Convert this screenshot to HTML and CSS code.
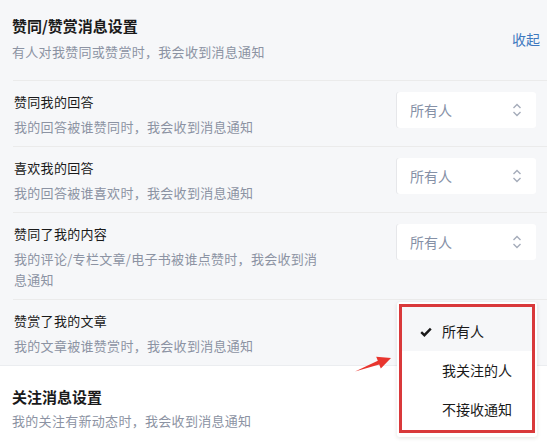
FILE: index.html
```html
<!DOCTYPE html>
<html lang="zh-CN">
<head>
  <meta charset="UTF-8">
  <title>消息设置</title>
  <link rel="stylesheet" href="styles.css">
</head>
<body>

<!-- 赞同/赞赏 -->
<div class="panel">
  <div class="panel-head">
    <div>
      <div class="section-title">赞同/赞赏消息设置</div>
      <div class="desc">有人对我赞同或赞赏时，我会收到消息通知</div>
    </div>
    <a class="toggle">收起</a>
  </div>

  <div class="rows">
    <div class="row">
      <div class="row-text">
        <div class="row-title">赞同我的回答</div>
        <div class="desc">我的回答被谁赞同时，我会收到消息通知</div>
      </div>
      <div class="select">所有人
        <svg class="chevron" width="10" height="14" viewBox="0 0 10 14"><polyline points="1.5,5 5,1.5 8.5,5"/><polyline points="1.5,9 5,12.5 8.5,9"/></svg>
      </div>
    </div>

    <div class="row">
      <div class="row-text">
        <div class="row-title">喜欢我的回答</div>
        <div class="desc">我的回答被谁喜欢时，我会收到消息通知</div>
      </div>
      <div class="select">所有人
        <svg class="chevron" width="10" height="14" viewBox="0 0 10 14"><polyline points="1.5,5 5,1.5 8.5,5"/><polyline points="1.5,9 5,12.5 8.5,9"/></svg>
      </div>
    </div>

    <div class="row">
      <div class="row-text">
        <div class="row-title">赞同了我的内容</div>
        <div class="desc">我的评论/专栏文章/电子书被谁点赞时，我会收到消息通知</div>
      </div>
      <div class="select">所有人
        <svg class="chevron" width="10" height="14" viewBox="0 0 10 14"><polyline points="1.5,5 5,1.5 8.5,5"/><polyline points="1.5,9 5,12.5 8.5,9"/></svg>
      </div>
    </div>

    <div class="row">
      <div class="row-text">
        <div class="row-title">赞赏了我的文章</div>
        <div class="desc">我的文章被谁赞赏时，我会收到消息通知</div>
      </div>
    </div>
  </div>
</div>

<!-- 关注 -->
<div class="section">
  <div class="section-title">关注消息设置</div>
  <div class="desc">我的关注有新动态时，我会收到消息通知</div>
</div>

<!-- open select menu -->
<div class="menu">
  <div class="mark">
    <div class="option active">
      <svg class="check" width="12" height="10" viewBox="0 0 12 10"><polyline points="1.2,5.2 4.4,8.2 10.8,1.6"/></svg>
      所有人
    </div>
    <div class="option">我关注的人</div>
    <div class="option">不接收通知</div>
  </div>
</div>

<svg class="arrow" width="45" height="28" viewBox="0 0 45 28">
  <polygon points="5,21.5 29.2,14.5 30.8,18.6 41,8 26.2,6.8 27.8,10.7"/>
</svg>

</body>
</html>
```

FILE: styles.css
```css
body {
  margin: 0;
  font-family: "Noto Sans CJK SC", "Microsoft YaHei", sans-serif;
  color: #1a1a1a;
  background: #fff;
}

.panel {
  background-color: #f6f7f9;
  border-bottom: 1px solid #ebedf0;
}

.panel-head {
  display: flex;
  justify-content: space-between;
  align-items: center;
  padding: 15px 7px 18px 12px;
}

.section-title {
  font-size: 15px;
  font-weight: bold;
  line-height: 22px;
}

.desc {
  font-size: 13px;
  letter-spacing: 0.3px;
  line-height: 21px;
  color: #8c93a3;
  margin-top: 4px;
}

.panel-head .desc {
  margin-top: 5px;
  line-height: 20px;
}

.toggle {
  font-size: 14px;
  color: #3e79c0;
  cursor: pointer;
}

.rows {
  margin-left: 13px;
}

.row {
  display: flex;
  justify-content: space-between;
  align-items: flex-start;
  padding: 10px 11px 9px 1px;
  border-top: 1px solid #ebebeb;
}

.row-text {
  width: 310px;
}

.row-title {
  font-size: 13px;
  letter-spacing: 0.3px;
  line-height: 21px;
}

.select {
  position: relative;
  width: 126px;
  height: 36px;
  margin-top: 1px;
  padding-left: 13px;
  line-height: 36px;
  font-size: 14px;
  color: #8590a6;
  background: #fff;
  border-radius: 3px;
  box-shadow: -1px 0 0 #e6e7ea;
}

.chevron {
  position: absolute;
  right: 14px;
  top: 11px;
  fill: none;
  stroke: #a5acba;
  stroke-width: 1.4;
}

.section {
  padding: 20px 12px;
}

.section .desc {
  margin-top: 3px;
  line-height: 20px;
}

/* dropdown that is open over the last row */
.menu {
  position: absolute;
  left: 397px;
  top: 302px;
  width: 136px;
  height: 131px;
  padding: 2px;
  background: #fff;
  border-radius: 3px;
  box-shadow: 0 1px 4px rgba(26, 26, 26, 0.12);
}

.mark {
  height: 123px;
  border: 3px solid #d9393b;
}

.option {
  position: relative;
  height: 39px;
  line-height: 39px;
  padding-left: 40px;
  font-size: 14px;
}

.option.active {
  height: 44px;
  padding-top: 4px;
  box-sizing: border-box;
  line-height: 41px;
  background: #f6f7f9;
}

.check {
  position: absolute;
  left: 18px;
  top: 20px;
  fill: none;
  stroke: #1a1a1a;
  stroke-width: 2.4;
}

.arrow {
  position: absolute;
  left: 350px;
  top: 350px;
  fill: #e8352e;
}
```
